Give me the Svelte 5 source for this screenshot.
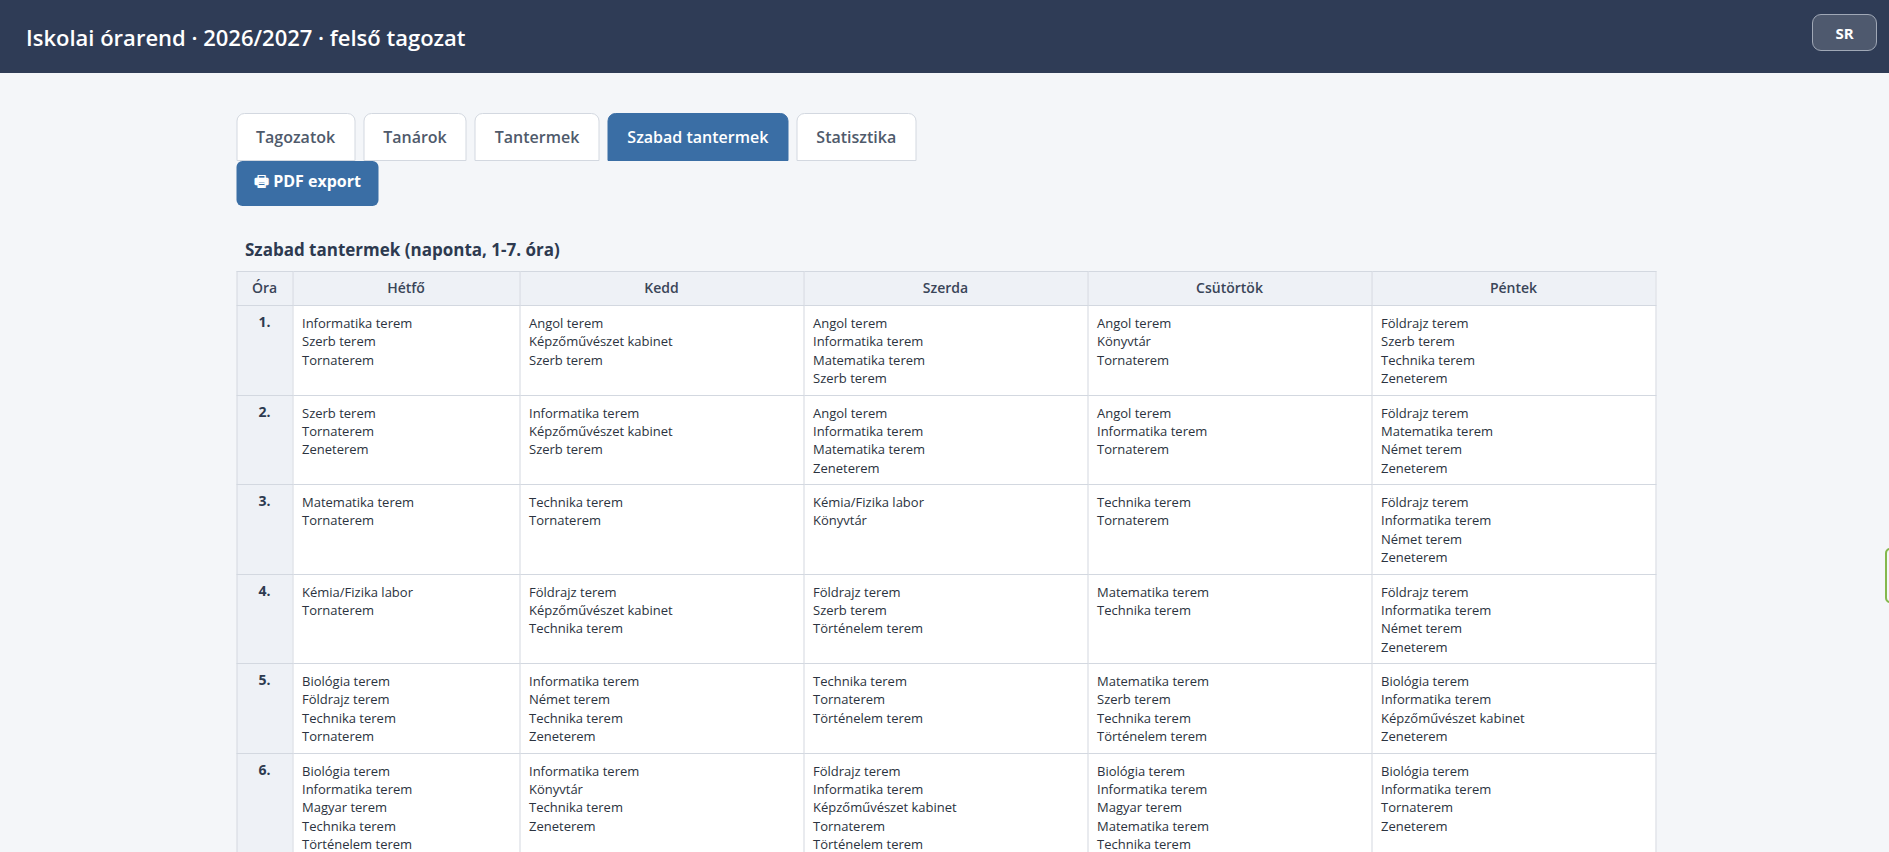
<script>
  const tabs = ['Tagozatok', 'Tanárok', 'Tantermek', 'Szabad tantermek', 'Statisztika'];
  const days = ['Hétfő', 'Kedd', 'Szerda', 'Csütörtök', 'Péntek'];
  const rows = [
    [['Informatika terem', 'Szerb terem', 'Tornaterem'], ['Angol terem', 'Képzőművészet kabinet', 'Szerb terem'], ['Angol terem', 'Informatika terem', 'Matematika terem', 'Szerb terem'], ['Angol terem', 'Könyvtár', 'Tornaterem'], ['Földrajz terem', 'Szerb terem', 'Technika terem', 'Zeneterem']],
    [['Szerb terem', 'Tornaterem', 'Zeneterem'], ['Informatika terem', 'Képzőművészet kabinet', 'Szerb terem'], ['Angol terem', 'Informatika terem', 'Matematika terem', 'Zeneterem'], ['Angol terem', 'Informatika terem', 'Tornaterem'], ['Földrajz terem', 'Matematika terem', 'Német terem', 'Zeneterem']],
    [['Matematika terem', 'Tornaterem'], ['Technika terem', 'Tornaterem'], ['Kémia/Fizika labor', 'Könyvtár'], ['Technika terem', 'Tornaterem'], ['Földrajz terem', 'Informatika terem', 'Német terem', 'Zeneterem']],
    [['Kémia/Fizika labor', 'Tornaterem'], ['Földrajz terem', 'Képzőművészet kabinet', 'Technika terem'], ['Földrajz terem', 'Szerb terem', 'Történelem terem'], ['Matematika terem', 'Technika terem'], ['Földrajz terem', 'Informatika terem', 'Német terem', 'Zeneterem']],
    [['Biológia terem', 'Földrajz terem', 'Technika terem', 'Tornaterem'], ['Informatika terem', 'Német terem', 'Technika terem', 'Zeneterem'], ['Technika terem', 'Tornaterem', 'Történelem terem'], ['Matematika terem', 'Szerb terem', 'Technika terem', 'Történelem terem'], ['Biológia terem', 'Informatika terem', 'Képzőművészet kabinet', 'Zeneterem']],
    [['Biológia terem', 'Informatika terem', 'Magyar terem', 'Technika terem', 'Történelem terem'], ['Informatika terem', 'Könyvtár', 'Technika terem', 'Zeneterem'], ['Földrajz terem', 'Informatika terem', 'Képzőművészet kabinet', 'Tornaterem', 'Történelem terem'], ['Biológia terem', 'Informatika terem', 'Magyar terem', 'Matematika terem', 'Technika terem'], ['Biológia terem', 'Informatika terem', 'Tornaterem', 'Zeneterem']],
    [['Biológia terem', 'Tornaterem'], ['Informatika terem', 'Zeneterem'], ['Földrajz terem', 'Tornaterem'], ['Magyar terem', 'Zeneterem'], ['Biológia terem', 'Zeneterem']]
  ];
</script>

<div class="page">
  <header class="topbar">
    <h1>Iskolai órarend · 2026/2027 · felső tagozat</h1>
    <button class="user">SR</button>
  </header>
  <main class="content">
    <nav class="tabs">
      {#each tabs as tab}
        <button class="tab" class:active={tab === 'Szabad tantermek'}>{tab}</button>
      {/each}
    </nav>
    <button class="export">🖶 PDF export</button>
    <h2>Szabad tantermek (naponta, 1-7. óra)</h2>
    <table>
      <colgroup>
        <col class="c-hour" /><col class="c-first" /><col class="c-day" /><col class="c-day" /><col class="c-day" /><col class="c-day" />
      </colgroup>
      <thead>
        <tr>
          <th>Óra</th>
          {#each days as day}<th>{day}</th>{/each}
        </tr>
      </thead>
      <tbody>
        {#each rows as row, i}
          <tr>
            <th class="hour">{i + 1}.</th>
            {#each row as cell}
              <td>{#each cell as room}<div>{room}</div>{/each}</td>
            {/each}
          </tr>
        {/each}
      </tbody>
    </table>
  </main>
  <div class="side-tab"></div>
</div>

<style>
  :global(body) {
    margin: 0;
    background: #f4f6f9;
    font-family: "Open Sans", "Noto Sans", sans-serif;
  }
  .page {
    position: relative;
    height: 852px;
    overflow: hidden;
  }
  .topbar {
    height: 73px;
    box-sizing: border-box;
    background: #2f3c56;
    color: #fff;
    display: flex;
    align-items: center;
    justify-content: space-between;
    padding: 0 12px 0 26px;
  }
  h1 {
    margin: 0;
    font-size: 22px;
    font-weight: 600;
  }
  .user {
    width: 65px;
    height: 37px;
    margin-bottom: 8px;
    border: 1px solid #a0a8b6;
    border-radius: 9px;
    background: #4e596e;
    color: #fff;
    font: 700 15px "Open Sans", sans-serif;
  }
  .content {
    width: 1420px;
    margin: 0 auto;
    padding-top: 40px;
    transform: translateX(1.5px);
  }
  .tabs {
    display: flex;
    gap: 8px;
  }
  .tab {
    height: 48px;
    padding: 0 19px;
    border: 1px solid #d3d8e0;
    border-radius: 8px 8px 0 0;
    background: #fff;
    color: #4f5a6b;
    font: 600 16px "Open Sans", sans-serif;
  }
  .tab.active {
    background: #3a6ea5;
    border-color: #3a6ea5;
    color: #fff;
  }
  .export {
    display: block;
    height: 45px;
    padding: 0 18px;
    border: 0;
    border-radius: 6px;
    background: #3a6ea5;
    color: #fff;
    font: 700 16px "Open Sans", sans-serif;
  }
  h2 {
    margin: 32px 0 9px 9px;
    font-size: 17px;
    line-height: 24px;
    font-weight: 700;
    color: #2d3a50;
  }
  table {
    width: 1420px;
    table-layout: fixed;
    border-collapse: collapse;
    background: #fff;
    font-size: 13px;
    line-height: 18.37px;
    color: #2b3340;
  }
  .c-hour { width: 56px; }
  .c-first { width: 227px; }
  .c-day { width: 284px; }
  th, td {
    border: 1px solid #d3d8e0;
    vertical-align: top;
  }
  thead th {
    background: #eef1f6;
    height: 33px;
    padding: 0;
    vertical-align: middle;
    font-size: 14px;
    font-weight: 600;
    color: #3a4558;
  }
  .hour {
    background: #eef1f6;
    padding: 7px 0;
    font-size: 14px;
    font-weight: 700;
    color: #2d3a50;
  }
  td {
    padding: 8px 9px 7px;
  }
  .side-tab {
    position: absolute;
    left: 1885px;
    top: 548px;
    width: 10px;
    height: 55px;
    box-sizing: border-box;
    border: 2px solid #84b84c;
    border-radius: 6px;
    background: #f4f6f9;
  }
</style>
